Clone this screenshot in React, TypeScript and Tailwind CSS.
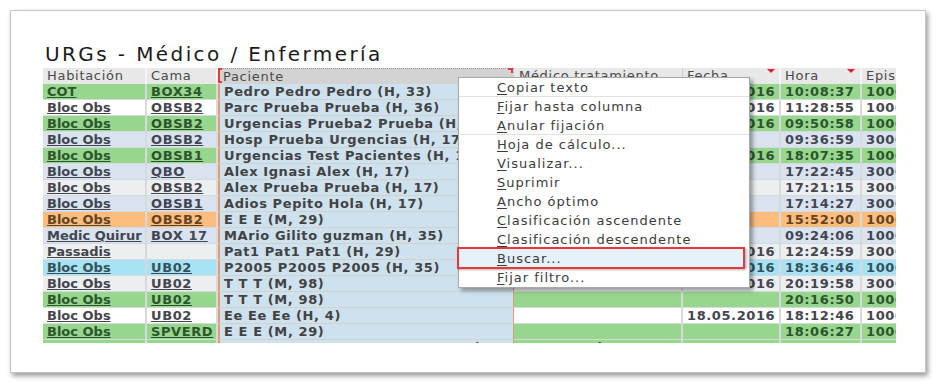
import React from "react";

type Kind = "green" | "white" | "blue" | "gray" | "orange" | "cyan";

const rowStyle: Record<Kind, string> = {
  green: "bg-[#97d68d] text-[#2b552d]",
  white: "bg-white text-[#45454d]",
  blue: "bg-[#d9e3ef] text-[#424652]",
  gray: "bg-[#eceff2] text-[#45454d]",
  orange: "bg-[#fdbd7e] text-[#634321]",
  cyan: "bg-[#a7e3f4] text-[#34505c]",
};

const rows: [string, string, string, string, string, string, string, Kind][] = [
  ["COT", "BOX34", "Pedro Pedro Pedro (H, 33)", "", "17.05.2016", "10:08:37", "10001234", "green"],
  ["Bloc Obs", "OBSB2", "Parc Prueba Prueba (H, 36)", "", "17.05.2016", "11:28:55", "10001235", "white"],
  ["Bloc Obs", "OBSB2", "Urgencias Prueba2 Prueba (H, 17)", "", "18.05.2016", "09:50:58", "10001236", "green"],
  ["Bloc Obs", "OBSB2", "Hosp Prueba Urgencias (H, 17)", "", "", "09:36:59", "30001237", "blue"],
  ["Bloc Obs", "OBSB1", "Urgencias Test Pacientes (H, 17)", "", "18.05.2016", "18:07:35", "10001238", "green"],
  ["Bloc Obs", "QBO", "Alex Ignasi Alex (H, 17)", "", "", "17:22:45", "30001239", "blue"],
  ["Bloc Obs", "OBSB2", "Alex Prueba Prueba (H, 17)", "", "", "17:21:15", "30001240", "gray"],
  ["Bloc Obs", "OBSB1", "Adios Pepito Hola (H, 17)", "", "", "17:14:27", "30001241", "blue"],
  ["Bloc Obs", "OBSB2", "E E E (M, 29)", "", "", "15:52:00", "10001242", "orange"],
  ["Medic Quirur", "BOX 17", "MArio Gilito guzman (H, 35)", "", "", "09:24:06", "10001243", "blue"],
  ["Passadis", "", "Pat1 Pat1 Pat1 (H, 29)", "", "16.05.2016", "12:24:59", "30001244", "gray"],
  ["Bloc Obs", "UB02", "P2005 P2005 P2005 (H, 35)", "", "18.05.2016", "18:36:46", "10001245", "cyan"],
  ["Bloc Obs", "UB02", "T T T (M, 98)", "", "18.05.2016", "20:19:58", "30001246", "gray"],
  ["Bloc Obs", "UB02", "T T T (M, 98)", "", "", "20:16:50", "10001247", "green"],
  ["Bloc Obs", "UB02", "Ee Ee Ee (H, 4)", "", "18.05.2016", "18:12:46", "10001248", "white"],
  ["Bloc Obs", "SPVERD", "E E E (M, 29)", "", "", "18:06:27", "10001249", "green"],
  ["HOSPI", "BOX 17", "CONTRA L CONTRA L CONTRA L (H, 16)", "Santos Ruiz", "", "09:36:24", "10001250", "green"],
];

const menu: { label: string; sep?: boolean; active?: boolean }[] = [
  { label: "Copiar texto", sep: true },
  { label: "Fijar hasta columna" },
  { label: "Anular fijación", sep: true },
  { label: "Hoja de cálculo..." },
  { label: "Visualizar..." },
  { label: "Suprimir" },
  { label: "Ancho óptimo" },
  { label: "Clasificación ascendente" },
  { label: "Clasificación descendente" },
  { label: "Buscar...", active: true },
  { label: "Fijar filtro..." },
];

const cols = "grid w-max grid-cols-[104px_71px_296px_169px_98px_81px_120px]";
const cell = "h-4 px-[4px] leading-[15px] whitespace-nowrap overflow-hidden border-b border-r-2 border-[#d6dadd]";

const App = () => {
  return (
    <div
      className="relative w-[938px] h-[385px] overflow-hidden bg-white pt-[10px] pl-[10px]"
      style={{ fontFamily: '"DejaVu Sans", Verdana, sans-serif' }}
    >
      <div className="w-[916px] h-[363px] border border-[#c4c4c4] bg-white pt-[33px] pl-[32px] shadow-[2px_3px_5px_rgba(0,0,0,0.4)]">
        <div className="w-[853px] h-[299px] overflow-hidden">
          <h1 className="h-[24px] pl-[2px] text-[20px] leading-[20px] tracking-[2.4px] text-[#1a1a1a]">
            URGs - Médico / Enfermería
          </h1>

          {/* Header */}
          <div className={`${cols} text-[13px] tracking-[0.7px] text-[#4a4a4a] bg-[#e8e8e8]`}>
            <div className="h-4 px-[4px] leading-[16px] border-r-2 border-[#f4f4f4]">Habitación</div>
            <div className="h-4 px-[4px] leading-[16px] border-r-2 border-[#f4f4f4]">Cama</div>
            <div className="relative h-4 px-[5px] leading-[15px] bg-[#d3d3d3] border-t border-dotted border-[#9a9a9a]">
              Paciente
              <span className="absolute left-0 -top-px bottom-[1px] w-[4px] border-l-2 border-y-2 border-[#e23a3a]"></span>
              <span className="absolute right-[1px] -top-px w-[5px] h-[5px] border-t-2 border-r-2 border-[#e23a3a]"></span>
            </div>
            <div className="h-4 px-[5px] leading-[16px] border-r border-[#cfcfcf]">Médico tratamiento</div>
            <div className="relative h-4 px-[4px] leading-[16px] border-r-2 border-[#f4f4f4]">
              Fecha
              <span className="absolute right-[4px] top-[1px] w-0 h-0 border-x-[4px] border-x-transparent border-t-[4px] border-t-[#e0202a]"></span>
            </div>
            <div className="relative h-4 px-[4px] leading-[16px] border-r-2 border-[#f4f4f4]">
              Hora
              <span className="absolute right-[5px] top-[1px] w-0 h-0 border-x-[4px] border-x-transparent border-t-[4px] border-t-[#e0202a]"></span>
            </div>
            <div className="h-4 px-[4px] leading-[16px]">Episodio</div>
          </div>

          {/* Rows */}
          {rows.map(([hab, cama, pac, med, fecha, hora, epi, kind], i) => (
            <div key={i} className={`${cols} text-[13px] font-bold tracking-[0.6px] ${rowStyle[kind]}`}>
              <div className={`${cell} tracking-[0px]`}>
                <span className="underline decoration-1 underline-offset-1">{hab}</span>
              </div>
              <div className={cell}>
                <span className="underline decoration-1 underline-offset-1">{cama}</span>
              </div>
              <div className="h-4 px-[4px] leading-[15px] whitespace-nowrap overflow-hidden bg-[#cde1ef] text-[#424242] border-l-2 border-l-[#e49b6d] border-r border-r-[#e49b6d] border-b border-b-[#d8d0c6]">
                {pac}
              </div>
              <div className={cell}>{med}</div>
              <div className={cell}>{fecha}</div>
              <div className={cell}>{hora}</div>
              <div className={cell}>{epi}</div>
            </div>
          ))}
        </div>
      </div>

      {/* Context menu */}
      <div className="absolute left-[458px] top-[77px] w-[292px] bg-white border border-[#a8a8a8] shadow-[3px_3px_4px_rgba(0,0,0,0.35)] text-[13px] tracking-[1px] text-[#3b3b3b]">
        {menu.map((m) => (
          <div
            key={m.label}
            className={`relative h-[19px] pl-[38px] leading-[19px] whitespace-nowrap ${m.sep ? "border-b border-[#e2e2e2] leading-[18px]" : ""} ${m.active ? "bg-[#e5f1fb]" : ""}`}
          >
            <span className="underline decoration-1 underline-offset-2">{m.label.charAt(0)}</span>
            {m.label.slice(1)}
            {m.active && (
              <span className="absolute -left-[2px] -top-[2px] -bottom-[1px] right-[4px] border-2 border-[#e8383a] shadow-[1px_1px_2px_rgba(0,0,0,0.3)]"></span>
            )}
          </div>
        ))}
      </div>
    </div>
  );
};

export default App;
